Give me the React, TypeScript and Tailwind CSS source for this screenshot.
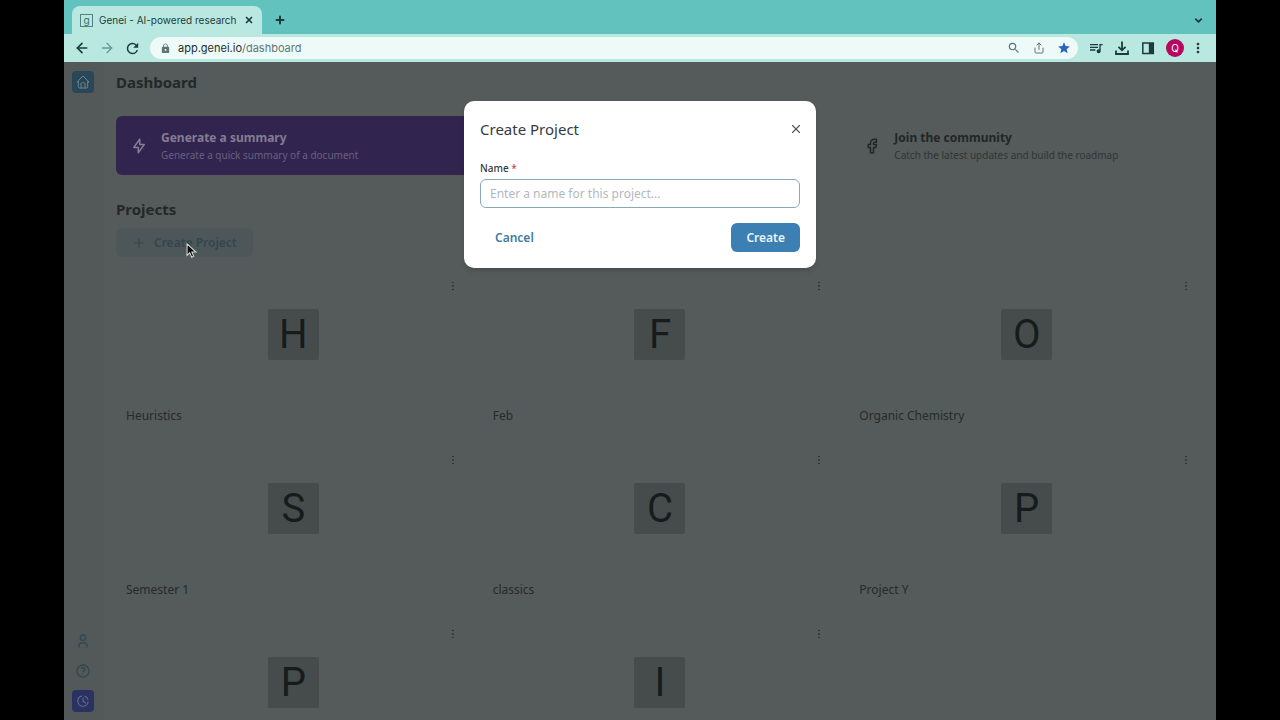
import { useState } from "react";
import { ArrowLeft, ArrowRight, ChevronDown, Plus, Share, X } from "lucide-react";
import {
  MdLock,
  MdMoreVert,
  MdQueueMusic,
  MdRefresh,
  MdSearch,
  MdStar,
} from "react-icons/md";
import {
  TbBolt,
  TbBrandFacebook,
  TbDotsVertical,
  TbHelp,
  TbHome,
  TbUser,
} from "react-icons/tb";

const projects = [
  { id: 1, initial: "H", name: "Heuristics" },
  { id: 2, initial: "F", name: "Feb" },
  { id: 3, initial: "O", name: "Organic Chemistry" },
  { id: 4, initial: "S", name: "Semester 1" },
  { id: 5, initial: "C", name: "classics" },
  { id: 6, initial: "P", name: "Project Y" },
  { id: 7, initial: "P" },
  { id: 8, initial: "I" },
];

const BrowserBar = () => (
  <header className="shrink-0 font-[Inter,sans-serif] text-[#1d3b3a]">
    <div className="flex h-[34px] items-end bg-[#62c2bd] pl-2 pr-3">
      <div className="flex h-7 w-[190px] items-center rounded-t-lg bg-[#b9e8e1] px-2">
        <span className="flex size-[13px] items-center justify-center border border-[#4f8581] text-[10px] leading-none text-[#3d6f6b]">
          g
        </span>
        <span className="ml-[6px] flex-1 whitespace-nowrap text-[10px]">
          Genei - AI-powered research
        </span>
        <button aria-label="Close tab">
          <X className="size-[10px]" strokeWidth={4} />
        </button>
      </div>
      <button aria-label="New tab" className="mb-2 ml-3">
        <Plus className="size-3" strokeWidth={4} />
      </button>
      <button aria-label="Search tabs" className="mb-2 ml-auto">
        <ChevronDown className="size-[11px]" strokeWidth={4} />
      </button>
    </div>
    <div className="flex h-7 items-center bg-[#b9e8e1] pl-[10px] pr-[14px]">
      <div className="flex items-center gap-[9px]">
        <button aria-label="Back">
          <ArrowLeft className="size-4" strokeWidth={2.5} />
        </button>
        <button aria-label="Forward" className="text-[#6d9995]">
          <ArrowRight className="size-4" strokeWidth={2} />
        </button>
        <button aria-label="Reload">
          <MdRefresh className="size-[17px]" />
        </button>
      </div>
      <div className="ml-[9px] flex h-[22px] flex-1 items-center rounded-full bg-[#eefaf8] pl-[10px] pr-[7px] text-[#5f7675]">
        <MdLock className="size-[11px]" />
        <span className="ml-[7px] flex-1 text-[11px]">
          <span className="text-[#1d2f2e]">app.genei.io</span>/dashboard
        </span>
        <div className="flex items-center gap-3">
          <MdSearch className="size-[14px]" />
          <Share className="size-3" />
          <MdStar className="size-[14px] text-[#2a63c0]" />
        </div>
      </div>
      <div className="ml-[10px] flex items-center gap-[10px]">
        <MdQueueMusic className="size-4" />
        <svg viewBox="0 0 16 16" fill="none" stroke="currentColor" strokeWidth="1.8" className="size-4">
          <path d="M8 1.500v8.500M4.500 6.800L8 10.300l3.500-3.500M2 10.500v3.500h12v-3.500" />
        </svg>
        <svg viewBox="0 0 16 16" className="size-4">
          <path d="M2.800 3h10.500v10.500H2.800z" fill="none" stroke="currentColor" strokeWidth="1.500" />
          <path d="M8.800 3h4.500v10.500H8.800z" fill="currentColor" />
        </svg>
        <span className="flex size-[18px] items-center justify-center rounded-full bg-[#b5085f] text-[10px] text-white">
          Q
        </span>
        <button aria-label="Browser menu" className="-mx-1">
          <MdMoreVert className="size-4" />
        </button>
      </div>
    </div>
  </header>
);

const Sidebar = () => (
  <aside className="flex w-10 shrink-0 flex-col items-center bg-[#535959] pb-2 pt-[9px] pr-[2px] text-[#33474f]">
    <a
      href="#home"
      aria-label="Home"
      className="flex size-[22px] items-center justify-center rounded-sm bg-[#2a4757] text-[#6d848e]"
    >
      <TbHome className="size-4" strokeWidth={1.5} />
    </a>
    <div className="mt-auto flex flex-col items-center gap-2">
      <button aria-label="Profile" className="flex size-[22px] items-center justify-center">
        <TbUser className="size-4" strokeWidth={2} />
      </button>
      <button aria-label="Help" className="flex size-[22px] items-center justify-center">
        <TbHelp className="size-4" strokeWidth={2} />
      </button>
      <button
        aria-label="Usage"
        className="flex size-[22px] items-center justify-center rounded-sm bg-[#2b3261] text-[#656c8c]"
      >
        <svg viewBox="0 0 24 24" fill="none" stroke="currentColor" strokeWidth="2" className="size-[14px]">
          <path d="M20.900 13.500A9 9 0 1 1 10.500 3.100" />
          <path d="M12 6.500V12l5 4" />
          <path d="M14.500 3.400a9 9 0 0 1 6.100 6.100" />
        </svg>
      </button>
    </div>
  </aside>
);

const ProjectCard = ({ initial, name }: { initial: string; name?: string }) => (
  <article className="relative flex h-[162px] flex-col items-center pt-[37px]">
    <button aria-label="Project options" className="absolute right-3 top-2 text-[#2c3131]">
      <TbDotsVertical className="size-3" />
    </button>
    <div className="flex size-[51px] items-center justify-center rounded-xs bg-[#464c4c] font-[Roboto,sans-serif] text-[40px] leading-none text-[#161c1c]">
      {initial}
    </div>
    {name && <h3 className="mt-auto w-full px-[10px] pb-[10px] text-xs text-[#262b2b]">{name}</h3>}
  </article>
);

const CreateProjectModal = ({ onClose }: { onClose: () => void }) => {
  const [name, setName] = useState("");

  return (
    <div className="absolute inset-x-0 top-[39px] flex justify-center">
      <form
        role="dialog"
        aria-label="Create Project"
        onSubmit={(e) => e.preventDefault()}
        className="w-88 rounded-[10px] bg-white p-4 shadow-md"
      >
        <div className="flex items-center justify-between">
          <h2 className="text-[15px] leading-6 text-[#343a3f]">Create Project</h2>
          <button type="button" aria-label="Close" onClick={onClose} className="-mr-[3px] text-[#555a5e]">
            <X className="size-[14px]" />
          </button>
        </div>
        <label htmlFor="project-name" className="mt-[19px] block text-[10px] font-medium leading-4 text-[#343a3f]">
          Name <span className="text-[#c84a5a]">*</span>
        </label>
        <input
          id="project-name"
          value={name}
          onChange={(e) => setName(e.target.value)}
          placeholder="Enter a name for this project..."
          className="mt-[3px] block h-[29px] w-full rounded-md border border-[#86a9bc] px-[9px] text-xs outline-none placeholder:text-[#b3b8bc]"
        />
        <div className="mt-[15px] flex items-center justify-between text-xs font-semibold">
          <button type="button" onClick={onClose} className="h-[29px] px-[15px] text-[#3f7ba3]">
            Cancel
          </button>
          <button type="submit" className="h-[29px] rounded-md bg-[#3c7fb3] px-[15px] text-[#e8f4fb]">
            Create
          </button>
        </div>
      </form>
    </div>
  );
};

export default function App() {
  const [isModalOpen, setIsModalOpen] = useState(true);

  return (
    <div className="h-screen bg-black px-16">
      <div className="flex h-full flex-col overflow-hidden bg-[#555a5a] font-['Noto_Sans',sans-serif]">
        <BrowserBar />
        <div className="relative flex min-h-0 flex-1">
          <Sidebar />
          <main className="min-w-0 flex-1 overflow-hidden px-3 pt-2">
            <h1 className="text-[15px] font-bold leading-6 text-[#232828]">Dashboard</h1>
            <div className="mt-[22px] grid grid-cols-3 gap-3">
              <button className="flex h-[59px] items-center rounded-md bg-[#31244f] px-[14px] text-left text-[#847d92]">
                <TbBolt className="size-[18px]" strokeWidth={2} />
                <span className="ml-[13px]">
                  <span className="block text-xs font-bold leading-[18px]">Generate a summary</span>
                  <span className="block text-[10px] leading-4 text-[#6a6080]">
                    Generate a quick summary of a document
                  </span>
                </span>
              </button>
              <button className="col-start-3 flex h-[59px] items-center px-[14px] text-left text-[#212626]">
                <TbBrandFacebook className="size-[18px]" strokeWidth={2} />
                <span className="ml-[13px]">
                  <span className="block text-xs font-bold leading-[18px]">Join the community</span>
                  <span className="block text-[10px] leading-4 text-[#303535]">
                    Catch the latest updates and build the roadmap
                  </span>
                </span>
              </button>
            </div>
            <h2 className="mt-[22px] text-[15px] font-bold leading-6 text-[#232828]">Projects</h2>
            <button
              onClick={() => setIsModalOpen(true)}
              className="relative mt-[7px] flex h-[29px] items-center rounded-md bg-[#4d5659] px-4 text-xs font-semibold text-[#33464f]"
            >
              <Plus className="size-[14px]" />
              <span className="ml-2">Create Project</span>
              <svg viewBox="0 0 12 18" className="absolute left-[70px] top-[15px] h-4 w-[11px]">
                <path
                  d="M1 1v13l3-3 2.200 5 2.300-1-2.100-4.800H11z"
                  fill="#0b0b0b"
                  stroke="#d4d4d4"
                  strokeWidth="1.200"
                />
              </svg>
            </button>
            <div className="mt-[15px] grid grid-cols-3 gap-3">
              {projects.map((project) => (
                <ProjectCard key={project.id} initial={project.initial} name={project.name} />
              ))}
            </div>
          </main>
          {isModalOpen && <CreateProjectModal onClose={() => setIsModalOpen(false)} />}
        </div>
      </div>
    </div>
  );
}
